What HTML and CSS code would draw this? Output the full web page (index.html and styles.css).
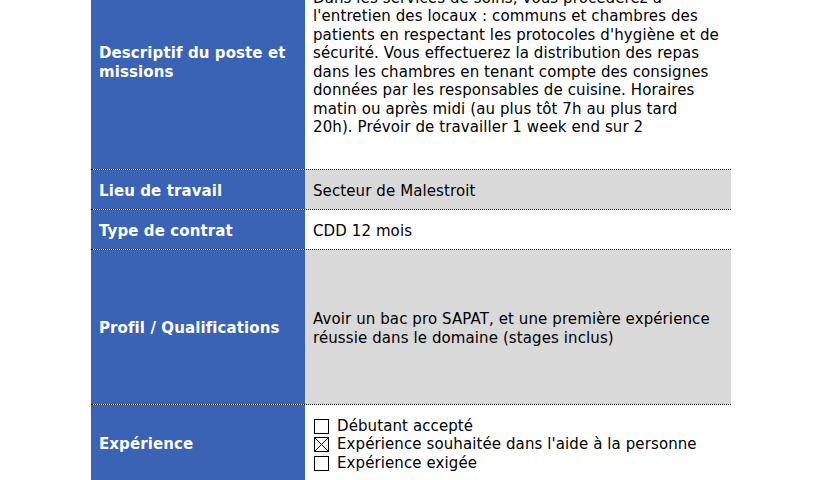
FILE: index.html
```html
<!DOCTYPE html>
<html lang="fr">
<head>
<meta charset="utf-8">
<title>Offre d'emploi</title>
<link rel="stylesheet" href="styles.css">
</head>
<body>
<div class="sheet">
  <div class="row row-desc">
    <div class="label">Descriptif du poste et missions</div>
    <div class="value">Dans les services de soins, vous procéderez à<br>l'entretien des locaux : communs et chambres des<br>patients en respectant les protocoles d'hygiène et de<br>sécurité. Vous effectuerez la distribution des repas<br>dans les chambres en tenant compte des consignes<br>données par les responsables de cuisine. Horaires<br>matin ou après midi (au plus tôt 7h au plus tard<br>20h). Prévoir de travailler 1 week end sur 2</div>
  </div>
  <div class="row row-short">
    <div class="label">Lieu de travail</div>
    <div class="value grey">Secteur de Malestroit</div>
  </div>
  <div class="row row-short">
    <div class="label">Type de contrat</div>
    <div class="value">CDD 12 mois</div>
  </div>
  <div class="row row-profil">
    <div class="label">Profil / Qualifications</div>
    <div class="value grey">Avoir un bac pro SAPAT, et une première expérience<br>réussie dans le domaine (stages inclus)</div>
  </div>
  <div class="row row-exp">
    <div class="label">Expérience</div>
    <div class="value">
      <div class="check"><svg class="box" viewBox="0 0 15 15"><rect x="0.5" y="0.5" width="14" height="14"/></svg>Débutant accepté</div>
      <div class="check"><svg class="box" viewBox="0 0 15 15"><rect x="0.5" y="0.5" width="14" height="14"/><path d="M1 1L14 14M14 1L1 14"/></svg>Expérience souhaitée dans l'aide à la personne</div>
      <div class="check"><svg class="box" viewBox="0 0 15 15"><rect x="0.5" y="0.5" width="14" height="14"/></svg>Expérience exigée</div>
    </div>
  </div>
</div>
</body>
</html>
```
FILE: styles.css
```css
html, body {
  margin: 0;
  padding: 0;
  background: #ffffff;
}
body {
  font-family: "DejaVu Sans", Verdana, sans-serif;
  font-size: 15px;
  line-height: 18.5px;
  letter-spacing: 0.1px;
  color: #000000;
  overflow: hidden;
}
.sheet {
  width: 640px;
  margin: -47px 0 0 91px;
}
.row {
  display: flex;
  border-top: 1px dotted #000000;
}
.row:first-child {
  border-top: none;
}
.label {
  width: 214px;
  flex: none;
  box-sizing: border-box;
  padding: 3px 8px 0;
  background: #3a62b5;
  color: #ffffff;
  font-weight: bold;
  display: flex;
  align-items: center;
}
.value {
  flex: 1;
  padding: 3px 0 0 8px;
  display: flex;
  flex-direction: column;
  justify-content: center;
  background: #ffffff;
  white-space: nowrap;
}
.value.grey {
  background: #d9d9d9;
}
.row-desc { height: 216px; }
.row-short { height: 39px; }
.row-profil { height: 154px; }
.row-exp { height: 80px; }
.row-exp .value {
  padding-top: 0;
  padding-bottom: 1px;
}
.row-exp .label {
  padding-top: 0;
  padding-bottom: 1px;
}
.check {
  display: flex;
  align-items: center;
}
.box {
  width: 15px;
  height: 15px;
  margin: 0 8px 0 1px;
  fill: none;
  stroke: #000000;
  stroke-width: 1;
}
```
